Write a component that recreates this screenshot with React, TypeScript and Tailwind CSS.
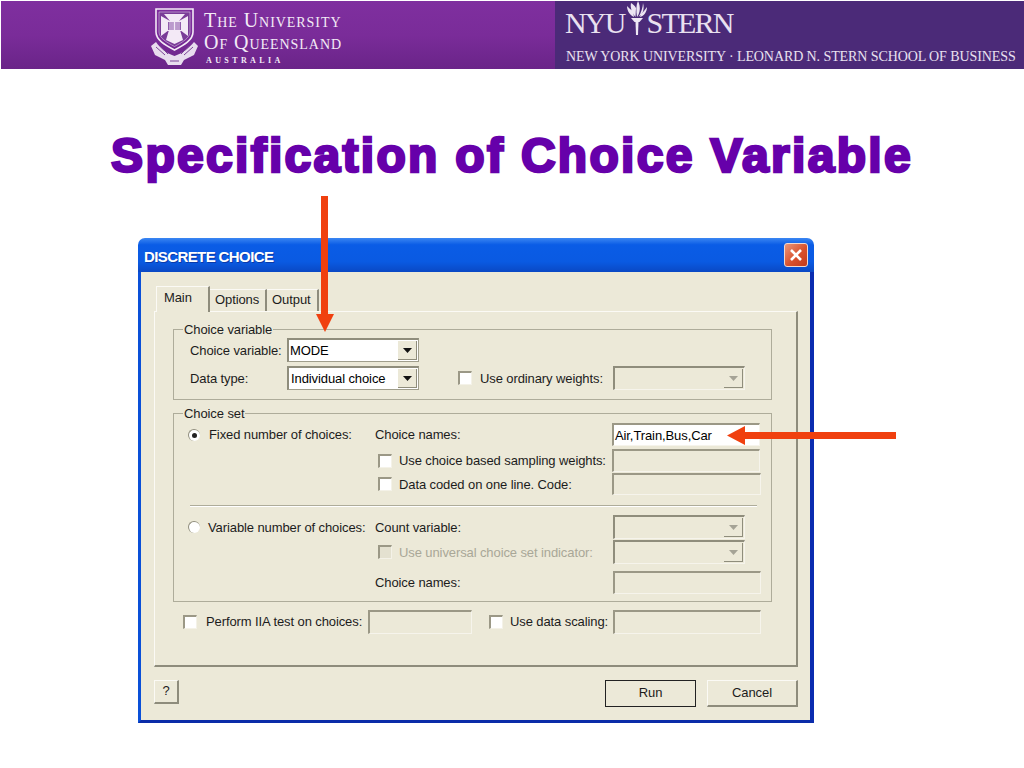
/**
 * Slide: Specification of Choice Variable
 * Cabeçalho com logos + diálogo estilo Windows XP
 */

const sans = "font-['Liberation_Sans',Arial,sans-serif]"

function Crest() {
  return (
    <svg width="50" height="60" viewBox="0 0 50 60" className="shrink-0">
      <path d="M5 1 H42 V24 C42 32 33 37 23.5 42 C14 37 5 32 5 24 Z" fill="none" stroke="#f3eaf6" strokeWidth="1.6" />
      <path d="M8 4 H39 V24 C39 30 31 34.5 23.5 38.5 C16 34.5 8 30 8 24 Z" fill="#7a3c98" stroke="#d9c6e2" strokeWidth="0.6" />
      {/* cross */}
      <path d="M13 6 H34 L28 13 L37 8 V28 L29 22 L32 32 L23.5 36 L15 32 L18 22 L10 28 V8 L19 13 Z" fill="#f3e9f6" />
      <rect x="15" y="13" width="17" height="10" fill="#f3e9f6" />
      <path d="M17 14 H22.5 V22 H17 Z M24.5 14 H30 V22 H24.5 Z" fill="#8f5bab" />
      <path d="M19 14 V22 M21 14 V22 M26 14 V22 M28 14 V22" stroke="#f3e9f6" strokeWidth="0.9" />
      {/* scroll */}
      <path d="M0 38 L5 34 C9 40 15 45 23.5 48 C32 45 38 40 43 34 L47 38 L43 47 L33 52 L30 57 H17 L14 52 L4 47 Z" fill="#e8dcee" />
      <path d="M5 39 L14 47 M9 38 L17 46 M42 39 L33 47 M38 38 L30 46 M19 53 H28" stroke="#7a4496" strokeWidth="1" />
    </svg>
  )
}

function Torch() {
  return (
    <svg width="24" height="37" viewBox="0 0 24 37" className="shrink-0">
      <path d="M2 5 C2 10 5 14 9 16 L8 10 C6 9 4 7 2 5 Z" fill="#ece5f2" />
      <path d="M6 2 C5 7 7 12 10.5 16 L11 7 C10 5 8 3 6 2 Z" fill="#ece5f2" />
      <path d="M13 0 C11 4 11 10 12 16 C15 12 16 6 13 0 Z" fill="#ece5f2" />
      <path d="M18 2 C18 6 16 12 13.5 16 C17 14 20 9 18 2 Z" fill="#ece5f2" />
      <path d="M22 6 C20 9 18 11 16 13 L15 16 C19 15 22 11 22 6 Z" fill="#ece5f2" />
      <path d="M6 17 H18 L14.5 21 H9.5 Z" fill="#efe8f4" />
      <path d="M10.5 21 H13.5 L13 34 H11 Z" fill="#efe8f4" />
    </svg>
  )
}

function CloseButton() {
  return (
    <div className="w-[24px] h-[24px] rounded-[3px] border border-[#f0d8d0] bg-[linear-gradient(135deg,#e8977c,#d9512c_55%,#c23a1c)] flex items-center justify-center">
      <svg width="14" height="14" viewBox="0 0 14 14">
        <path d="M2 2 L12 12 M12 2 L2 12" stroke="#fff" strokeWidth="2.6" />
      </svg>
    </div>
  )
}

function Checkbox({ disabled = false }: { disabled?: boolean }) {
  return (
    <span
      className={`block shrink-0 w-[14px] h-[14px] border-t-2 border-l-2 border-r border-b border-t-[#9b9886] border-l-[#9b9886] border-r-[#f4f2e8] border-b-[#f4f2e8] ${
        disabled ? 'bg-[#e4e1d0]' : 'bg-white'
      }`}
    />
  )
}

function Radio({ checked = false }: { checked?: boolean }) {
  return (
    <span className="shrink-0 w-[12px] h-[12px] rounded-full bg-white border-t border-l border-[#8f8d7c] flex items-center justify-center">
      {checked && <span className="block w-[5px] h-[5px] rounded-full bg-[#222]" />}
    </span>
  )
}

function Field({
  width,
  height = 'h-[23px]',
  white = false,
  children,
}: {
  width: string
  height?: string
  white?: boolean
  children?: React.ReactNode
}) {
  return (
    <div
      className={`${width} ${height} shrink-0 border-t-2 border-l-2 border-r border-b border-t-[#9b9886] border-l-[#9b9886] border-r-[#f6f4ec] border-b-[#f6f4ec] flex items-center pl-[1px] text-black ${
        white ? 'bg-white' : ''
      }`}
    >
      {children}
    </div>
  )
}

function Combo({ value, disabled = false, pad = false }: { value?: string; disabled?: boolean; pad?: boolean }) {
  return (
    <div
      className={`w-[132px] h-[24px] shrink-0 border-t-2 border-l-2 border-r border-b border-t-[#8f8d7c] border-l-[#8f8d7c] flex items-center justify-between pr-[1px] ${
        disabled ? 'border-r-[#f6f4ec] border-b-[#f6f4ec]' : 'bg-white border-r-[#a09e8c] border-b-[#a09e8c]'
      } ${pad ? 'pl-[2px]' : 'pl-[1px]'}`}
    >
      <span className="text-black">{value}</span>
      <span className="w-[19px] h-[19px] border-r border-b border-r-[#8f8d7c] border-b-[#8f8d7c] bg-[#ece9d8] flex items-center justify-center">
        <svg width="9" height="5" viewBox="0 0 9 5">
          <path d="M0 0 H9 L4.5 5 Z" fill={disabled ? '#a5a396' : '#111'} />
        </svg>
      </span>
    </div>
  )
}

function Group({ legend, className, children }: { legend: string; className: string; children: React.ReactNode }) {
  return (
    <fieldset className={`${className} w-[599px] border border-[#aeac9a]`}>
      <legend className="ml-[9px] px-[1px] h-[15px] leading-[15px]">{legend}</legend>
      {children}
    </fieldset>
  )
}

function Tab({ label, active = false }: { label: string; active?: boolean }) {
  if (active) {
    return (
      <div className="relative z-10 w-[54px] h-[26px] bg-[#ece9d8] border-t border-l border-[#fbfaf5] border-r-2 border-r-[#8e8c7c] pl-[7px] pt-[3px] -mb-px">
        Main
      </div>
    )
  }
  return (
    <div className="h-[22px] bg-[#ece9d8] border-t border-[#fbfaf5] border-r-2 border-r-[#8e8c7c] pl-[5px] pr-[6px] pt-[2px]">
      {label}
    </div>
  )
}

function Button({ label, width, height, primary = false }: { label: string; width: string; height: string; primary?: boolean }) {
  return (
    <div
      className={`${width} ${height} pb-[2px] flex items-center justify-center bg-[#ece9d8] ${
        primary
          ? 'border border-[#222]'
          : 'border-t border-l border-t-[#fbfaf5] border-l-[#fbfaf5] border-r-2 border-b-2 border-r-[#8e8c7c] border-b-[#8e8c7c]'
      }`}
    >
      {label}
    </div>
  )
}

function Dialog() {
  return (
    <div className={`${sans} w-[676px] ml-[138px] mt-[58px] text-[13px] leading-[15px] text-[#1c1c1c] tracking-[-0.1px]`}>
      {/* Title bar */}
      <div className="h-[34px] rounded-t-[7px] bg-[linear-gradient(#3b86f2,#0a5ce6_20%,#0a5ae2_70%,#0a48c4)] flex items-center justify-between pl-[6px] pr-[6px]">
        <span className="pt-[2px] text-white font-bold text-[15px] tracking-[-0.6px] [text-shadow:1px_1px_#0a3aa8]">DISCRETE CHOICE</span>
        <CloseButton />
      </div>

      {/* Body */}
      <div className="h-[451px] bg-[#ece9d8] border-l-[3px] border-r-[4px] border-b-[3px] border-l-[#0a50d8] border-r-[#0a2cb0] border-b-[#0a2ca8] pl-[13px] pt-[14px]">
        <div className="flex items-end h-[25px] pl-[2px]">
          <Tab label="Main" active />
          <Tab label="Options" />
          <Tab label="Output" />
        </div>

        {/* Tab panel */}
        <div className="w-[644px] h-[356px] border-t border-l border-t-[#fbfaf5] border-l-[#fbfaf5] border-r-2 border-b-2 border-r-[#8e8c7c] border-b-[#8e8c7c] pt-[10px]">
          <Group legend="Choice variable" className="ml-[18px] h-[78px]">
            <div className="flex items-center h-[24px] mt-[1px] pl-[16px]">
              <span className="w-[97px]">Choice variable:</span>
              <Combo value="MODE" />
            </div>
            <div className="flex items-center h-[24px] mt-[4px] pl-[16px]">
              <span className="w-[97px]">Data type:</span>
              <Combo value="Individual choice" pad />
              <span className="ml-[39px]">
                <Checkbox />
              </span>
              <span className="ml-[8px] w-[133px]">Use ordinary weights:</span>
              <Combo disabled />
            </div>
          </Group>

          <Group legend="Choice set" className="ml-[18px] mt-[6px] h-[196px]">
            <div className="flex items-center h-[23px] mt-[2px] pl-[14px]">
              <Radio checked />
              <span className="ml-[9px] w-[166px]">Fixed number of choices:</span>
              <span className="w-[237px]">Choice names:</span>
              <Field width="w-[148px]" white>
                Air,Train,Bus,Car
              </Field>
            </div>
            <div className="flex items-center h-[23px] mt-[3px] pl-[204px]">
              <Checkbox />
              <span className="ml-[7px] w-[213px]">Use choice based sampling weights:</span>
              <Field width="w-[148px]" />
            </div>
            <div className="flex items-center h-[22px] mt-[1px] pl-[204px]">
              <Checkbox />
              <span className="ml-[7px] w-[213px]">Data coded on one line. Code:</span>
              <Field width="w-[149px]" height="h-[22px]" />
            </div>
            <div className="h-px ml-[16px] w-[567px] mt-[10px] bg-[#aeac9a] border-b border-b-white box-content" />
            <div className="flex items-center h-[24px] mt-[8px] pl-[14px]">
              <Radio />
              <span className="ml-[8px] w-[167px]">Variable number of choices:</span>
              <span className="w-[238px]">Count variable:</span>
              <Combo disabled />
            </div>
            <div className="flex items-center h-[24px] mt-[1px] pl-[204px]">
              <Checkbox disabled />
              <span className="ml-[7px] w-[214px] text-[#a9a797]">Use universal choice set indicator:</span>
              <Combo disabled />
            </div>
            <div className="flex items-center h-[23px] mt-[7px] pl-[201px]">
              <span className="w-[238px]">Choice names:</span>
              <Field width="w-[148px]" />
            </div>
          </Group>

          <div className="flex items-center h-[24px] mt-[8px] pl-[28px]">
            <Checkbox />
            <span className="ml-[9px] w-[162px] pb-[2px]">Perform IIA test on choices:</span>
            <Field width="w-[104px]" height="h-[24px]" />
            <span className="ml-[17px]">
              <Checkbox />
            </span>
            <span className="ml-[7px] w-[103px] pb-[2px]">Use data scaling:</span>
            <Field width="w-[148px]" height="h-[24px]" />
          </div>
        </div>

        {/* Buttons */}
        <div className="w-[644px] mt-[13px] flex items-start justify-between">
          <Button label="?" width="w-[25px]" height="h-[24px]" />
          <div className="flex gap-[11px]">
            <Button label="Run" width="w-[91px]" height="h-[27px]" primary />
            <Button label="Cancel" width="w-[91px]" height="h-[27px]" />
          </div>
        </div>
      </div>
    </div>
  )
}

export default function App() {
  return (
    <div className="relative w-[1024px] h-[768px] overflow-hidden bg-white">
      {/* Header */}
      <header className="flex h-[68px] mt-px ml-px font-['Liberation_Serif',serif]">
        <div className="w-[554px] pl-[150px] pt-[7px] flex gap-[3px] bg-[linear-gradient(#7f2f9f,#7a2c99_50%,#6a2488)] text-[#f3ebf6]">
          <Crest />
          <div className="pt-[1px]">
            <div className="text-[20px] leading-[22px] [font-variant:small-caps] tracking-[0.95px] whitespace-nowrap">The University</div>
            <div className="text-[20px] leading-[22px] [font-variant:small-caps] tracking-[0.95px] whitespace-nowrap">Of Queensland</div>
            <div className="text-[8px] leading-[12px] mt-[2px] ml-[2px] font-bold tracking-[3.4px]">AUSTRALIA</div>
          </div>
        </div>
        <div className="flex-1 bg-[#4b2a78] text-[#e9e1f0] pl-[10px]">
          <div className="flex items-start h-[40px] text-[30px] leading-[44px] tracking-[-1.8px]">
            <span>NYU</span>
            <span className="mr-[-2px]">
              <Torch />
            </span>
            <span>STERN</span>
          </div>
          <div className="mt-[8px] ml-[1px] text-[14px] leading-[16px] tracking-[-0.09px] whitespace-nowrap">
            NEW YORK UNIVERSITY · LEONARD N. STERN SCHOOL OF BUSINESS
          </div>
        </div>
      </header>

      {/* Title */}
      <h1 className={`${sans} mt-[63px] h-[48px] text-center text-[48px] leading-[48px] font-bold text-[#6600aa] tracking-[2.3px] [-webkit-text-stroke:2.6px_#6600aa] whitespace-nowrap`}>
        Specification of Choice Variable
      </h1>

      <Dialog />

      {/* Arrows */}
      <svg width="1024" height="768" className="absolute left-0 top-0 pointer-events-none">
        <path d="M321 196 H328 V314 H334 L325 332 L316 314 H321 Z" fill="#f0400f" />
        <path d="M896 432 V439 H745 V445 L727 435.5 L745 426 V432 Z" fill="#f0400f" />
      </svg>
    </div>
  )
}
